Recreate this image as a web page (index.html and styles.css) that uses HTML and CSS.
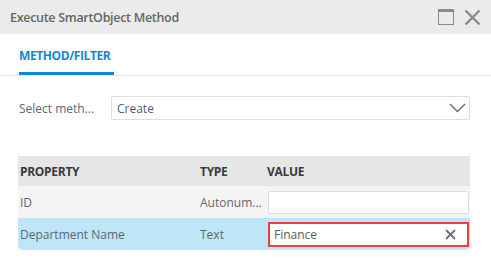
FILE: index.html
```html
<!DOCTYPE html>
<html lang="en">
<head>
  <meta charset="UTF-8">
  <title>Execute SmartObject Method</title>
  <link rel="stylesheet" href="styles.css">
</head>
<body>
  <div class="dialog">
    <div class="dialog-header">
      <div class="dialog-title">Execute SmartObject Method</div>
      <div class="dialog-buttons">
        <svg width="17" height="17" viewBox="0 0 17 17">
          <rect x="0.5" y="0.5" width="15" height="15" fill="none" stroke="#8a8a8a" stroke-width="1"/>
          <rect x="0" y="0" width="16" height="3" fill="#8a8a8a"/>
        </svg>
        <svg width="17" height="17" viewBox="0 0 17 17">
          <path d="M1.5 1.5 L15.5 15.5 M15.5 1.5 L1.5 15.5" stroke="#8a8a8a" stroke-width="2.4" fill="none"/>
        </svg>
      </div>
    </div>

    <div class="tabs">
      <div class="tab active">METHOD/FILTER</div>
    </div>

    <div class="content">
      <div class="field-row">
        <label class="field-label">Select meth...</label>
        <div class="select-box">
          <span>Create</span>
          <svg width="17" height="10" viewBox="0 0 17 10">
            <path d="M1 1 L8.5 8.5 L16 1" stroke="#666" stroke-width="1.3" fill="none"/>
          </svg>
        </div>
      </div>

      <div class="grid">
        <div class="grid-row grid-head">
          <div class="col-prop">PROPERTY</div>
          <div class="col-type">TYPE</div>
          <div class="col-value">VALUE</div>
        </div>
        <div class="grid-row">
          <div class="col-prop">ID</div>
          <div class="col-type">Autonum...</div>
          <div class="col-value"><div class="cell-input"></div></div>
        </div>
        <div class="grid-row selected">
          <div class="col-prop">Department Name</div>
          <div class="col-type">Text</div>
          <div class="col-value">
            <div class="cell-input error">
              <span>Finance</span>
              <svg width="11" height="11" viewBox="0 0 11 11">
                <path d="M1 1 L10 10 M10 1 L1 10" stroke="#667080" stroke-width="1.8" fill="none"/>
              </svg>
            </div>
          </div>
        </div>
      </div>
    </div>
  </div>
</body>
</html>
```

FILE: styles.css
```css
body {
  margin: 0;
  font-family: "Open Sans", sans-serif;
  background: white;
}
.dialog {
  width: 491px;
  height: 270px;
  background: white;
}
.dialog-header {
  height: 34px;
  background: #ebebeb;
  display: flex;
  align-items: center;
  justify-content: space-between;
  padding: 0 10px;
}
.dialog-title {
  font-size: 12.5px;
  font-weight: 600;
  color: #666;
  letter-spacing: -0.3px;
}
.dialog-buttons {
  display: flex;
  gap: 9px;
  margin-top: 1px;
}
.tabs {
  height: 41px;
  border-bottom: 1px solid #e4e4e4;
  padding-left: 19px;
  display: flex;
}
.tab {
  font-size: 12px;
  font-weight: 700;
  color: #0f88d2;
  letter-spacing: -0.4px;
  padding-top: 13px;
  border-bottom: 3px solid #0f88d2;
  box-sizing: border-box;
  width: 95px;
}
.content {
  padding: 20px 21px 0 18px;
}
.field-row {
  display: flex;
  align-items: center;
  gap: 9px;
}
.field-label {
  width: 83px;
  padding-left: 1px;
  font-size: 12px;
  color: #5d6674;
}
.select-box {
  flex: 1;
  height: 24px;
  box-sizing: border-box;
  border: 1px solid #dcdcdc;
  border-radius: 2px;
  display: flex;
  align-items: center;
  justify-content: space-between;
  padding: 0 3px 0 5px;
  font-size: 12px;
  color: #555d68;
}
.grid {
  margin-top: 36px;
  border-radius: 0 0 4px 4px;
  overflow: hidden;
}
.grid-row {
  display: flex;
  align-items: center;
  height: 32px;
  background: #f4f4f4;
  font-size: 12px;
  color: #5d6674;
}
.grid-head {
  height: 30px;
  background: #e6e6e6;
  font-weight: 700;
  color: #3a3a3a;
  letter-spacing: -0.3px;
}
.grid-row.selected {
  background: #bfe6f8;
}
.col-prop {
  width: 179px;
  padding-left: 2px;
  box-sizing: border-box;
}
.col-type {
  width: 67px;
  padding-left: 3px;
  box-sizing: border-box;
  white-space: nowrap;
}
.col-value {
  flex: 1;
  padding-left: 4px;
  padding-right: 1px;
}
.grid-head .col-value {
  padding-left: 3px;
}
.cell-input {
  height: 23px;
  background: white;
  border: 1px solid #dddddd;
  border-radius: 2px;
  box-sizing: border-box;
}
.cell-input.error {
  height: 25px;
  border: 2px solid #f03c3c;
  border-radius: 0;
  display: flex;
  align-items: center;
  justify-content: space-between;
  padding: 0 11px 0 4px;
  font-size: 12px;
  color: #555d68;
}
```
